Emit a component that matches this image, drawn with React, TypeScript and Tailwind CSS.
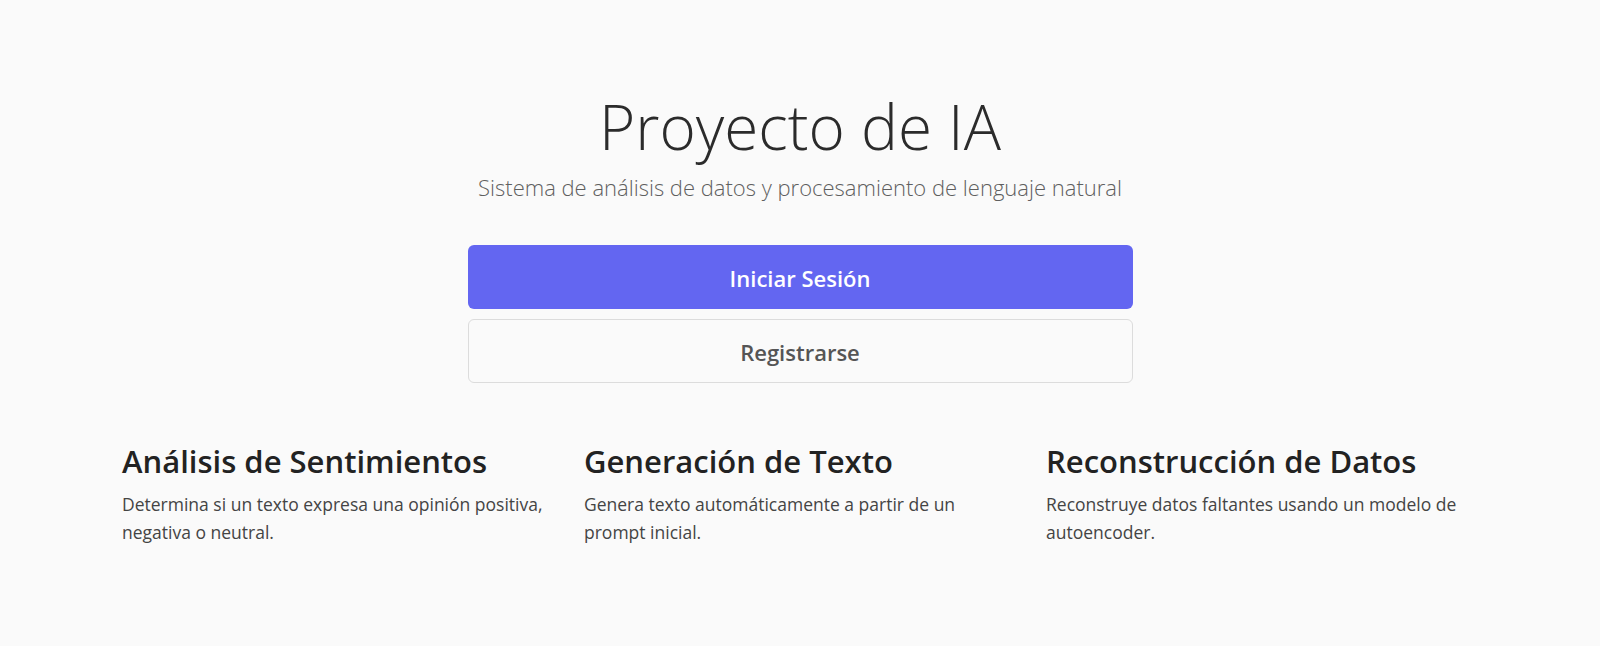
const features = [
  {
    title: "Análisis de Sentimientos",
    text: "Determina si un texto expresa una opinión positiva, negativa o neutral.",
  },
  {
    title: "Generación de Texto",
    text: "Genera texto automáticamente a partir de un prompt inicial.",
  },
  {
    title: "Reconstrucción de Datos",
    text: "Reconstruye datos faltantes usando un modelo de autoencoder.",
  },
];

function App() {
  return (
    <div className="min-h-[646px] bg-[#fafafa] font-['Open_Sans','Noto_Sans',sans-serif] text-[#333]">
      <main className="flex flex-col items-center pt-[88px]">
        <h1 className="text-[62px] leading-[76px] font-light text-[#2b2b2b]">
          Proyecto de IA
        </h1>
        <p className="mt-[8px] text-[22px] leading-[30px] font-light text-[#5f5f5f]">
          Sistema de análisis de datos y procesamiento de lenguaje natural
        </p>

        <div className="mt-[43px] flex w-[665px] flex-col gap-[10px]">
          <button className="h-[64px] rounded-md bg-[#6366f1] pt-[3px] text-[22px] font-semibold text-white">
            Iniciar Sesión
          </button>
          <button className="h-[64px] rounded-md border border-[#dcdcdc] bg-[#fafafa] pt-[3px] text-[22px] font-semibold text-[#555]">
            Registrarse
          </button>
        </div>

        <section className="mt-[60px] grid w-[1356px] grid-cols-3 gap-[30px]">
          {features.map((f) => (
            <div key={f.title}>
              <h2 className="text-[31px] leading-[36px] font-semibold text-[#222]">
                {f.title}
              </h2>
              <p className="mt-[11px] text-[17.5px] leading-[28px] text-[#444]">
                {f.text}
              </p>
            </div>
          ))}
        </section>
      </main>
    </div>
  );
}

export default App;
